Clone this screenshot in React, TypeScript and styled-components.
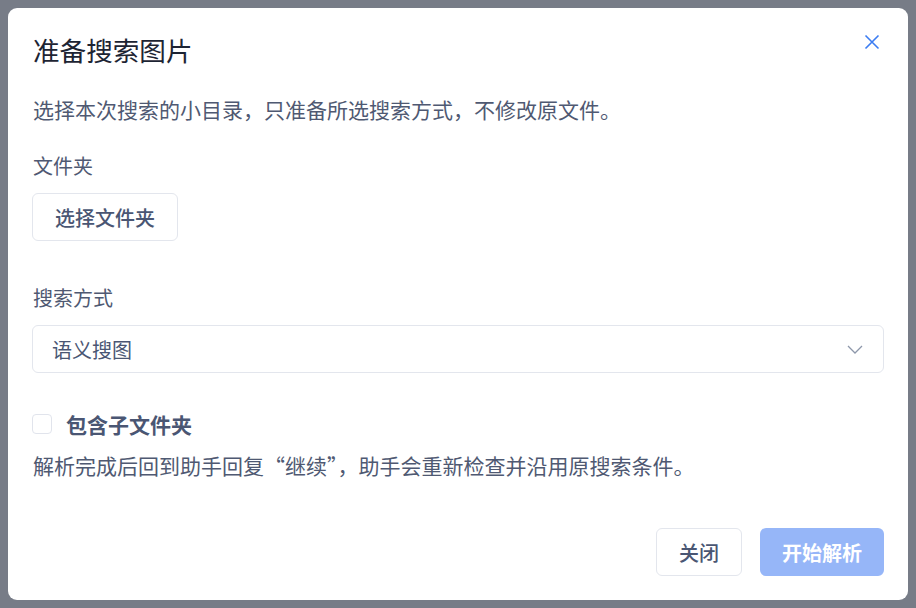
import React, { useState } from "react";
import styled, { createGlobalStyle } from "styled-components";

const GlobalStyle = createGlobalStyle`
  html, body {
    margin: 0;
    padding: 0;
    background: #777c87;
  }
  * {
    box-sizing: border-box;
  }
`;

const Backdrop = styled.div`
  min-height: 100vh;
  padding: 8px;
  background: #777c87;
  font-family: "Noto Sans CJK SC", "Noto Sans", sans-serif;
`;

const Dialog = styled.div`
  width: 900px;
  padding: 24px;
  background: #fff;
  border-radius: 9px;
  display: flex;
  flex-direction: column;
`;

const Header = styled.div`
  display: flex;
  justify-content: space-between;
  align-items: flex-start;
`;

const Title = styled.h2`
  margin: 0;
  padding-left: 1px;
  font-size: 26.6px;
  line-height: 36px;
  font-weight: 400;
  color: #1d2433;
`;

const CloseButton = styled.button`
  width: 24px;
  height: 24px;
  margin-top: -2px;
  padding: 0;
  border: none;
  background: transparent;
  display: flex;
  align-items: center;
  justify-content: center;
  cursor: pointer;
`;

// full-width quote marks, as in the reference
const Text = styled.p<{ $top: number }>`
  margin: ${(p) => p.$top}px 0 0;
  padding-left: 1px;
  font-size: 21px;
  line-height: 30px;
  color: #4f5972;
  font-feature-settings: "fwid";
`;

const Label = styled.div<{ $top: number }>`
  margin-top: ${(p) => p.$top}px;
  padding-left: 1px;
  font-size: 20px;
  line-height: 30px;
  color: #4f5972;
`;

const GhostButton = styled.button`
  height: 48px;
  padding: 0 22px;
  border: 1px solid #e3e6ed;
  border-radius: 6px;
  background: #fff;
  font-family: inherit;
  font-size: 20px;
  font-weight: 500;
  color: #4a5673;
  cursor: pointer;
`;

const FolderButton = styled(GhostButton)`
  align-self: flex-start;
  margin-top: 12px;
`;

const Select = styled.div`
  margin-top: 12px;
  height: 48px;
  padding: 0 20px 0 19px;
  border: 1px solid #e3e6ed;
  border-radius: 6px;
  display: flex;
  align-items: center;
  justify-content: space-between;
  font-size: 20px;
  color: #4a5673;
`;

const CheckRow = styled.label`
  margin-top: 36px;
  height: 30px;
  display: flex;
  align-items: center;
  gap: 14px;
  cursor: pointer;
`;

const Box = styled.span<{ $on: boolean }>`
  width: 20px;
  height: 20px;
  border: 1px solid #e1e4ec;
  border-radius: 4px;
  background: ${(p) => (p.$on ? "#3b7cf2" : "#fff")};
`;

const CheckText = styled.span`
  font-size: 21px;
  font-weight: 600;
  color: #4a5673;
`;

const Footer = styled.div`
  margin-top: 48px;
  display: flex;
  justify-content: flex-end;
  gap: 18px;
`;

const PrimaryButton = styled.button`
  height: 48px;
  padding: 0 22px;
  border: none;
  border-radius: 6px;
  background: #96b6f8;
  font-family: inherit;
  font-size: 20px;
  font-weight: 600;
  color: #fff;
  cursor: not-allowed;
`;

const App = () => {
  const [includeSub, setIncludeSub] = useState(false);

  return (
    <>
      <GlobalStyle />
      <Backdrop>
        <Dialog>
          <Header>
            <Title>准备搜索图片</Title>
            <CloseButton aria-label="关闭">
              <svg width="16" height="16" viewBox="0 0 16 16">
                <path d="M1.5 1.5L14.5 14.5M14.5 1.5L1.5 14.5" stroke="#3b7cf2" strokeWidth="1.6" fill="none" />
              </svg>
            </CloseButton>
          </Header>
          <Text $top={26}>选择本次搜索的小目录，只准备所选搜索方式，不修改原文件。</Text>
          <Label $top={27}>文件夹</Label>
          <FolderButton>选择文件夹</FolderButton>
          <Label $top={42}>搜索方式</Label>
          <Select>
            <span>语义搜图</span>
            <svg width="16" height="9" viewBox="0 0 16 9">
              <polyline points="1,1 8,8 15,1" stroke="#8d97aa" strokeWidth="1.3" fill="none" />
            </svg>
          </Select>
          <CheckRow onClick={() => setIncludeSub(!includeSub)}>
            <Box $on={includeSub} />
            <CheckText>包含子文件夹</CheckText>
          </CheckRow>
          <Text $top={11}>解析完成后回到助手回复“继续”，助手会重新检查并沿用原搜索条件。</Text>
          <Footer>
            <GhostButton>关闭</GhostButton>
            <PrimaryButton disabled>开始解析</PrimaryButton>
          </Footer>
        </Dialog>
      </Backdrop>
    </>
  );
};

export default App;
